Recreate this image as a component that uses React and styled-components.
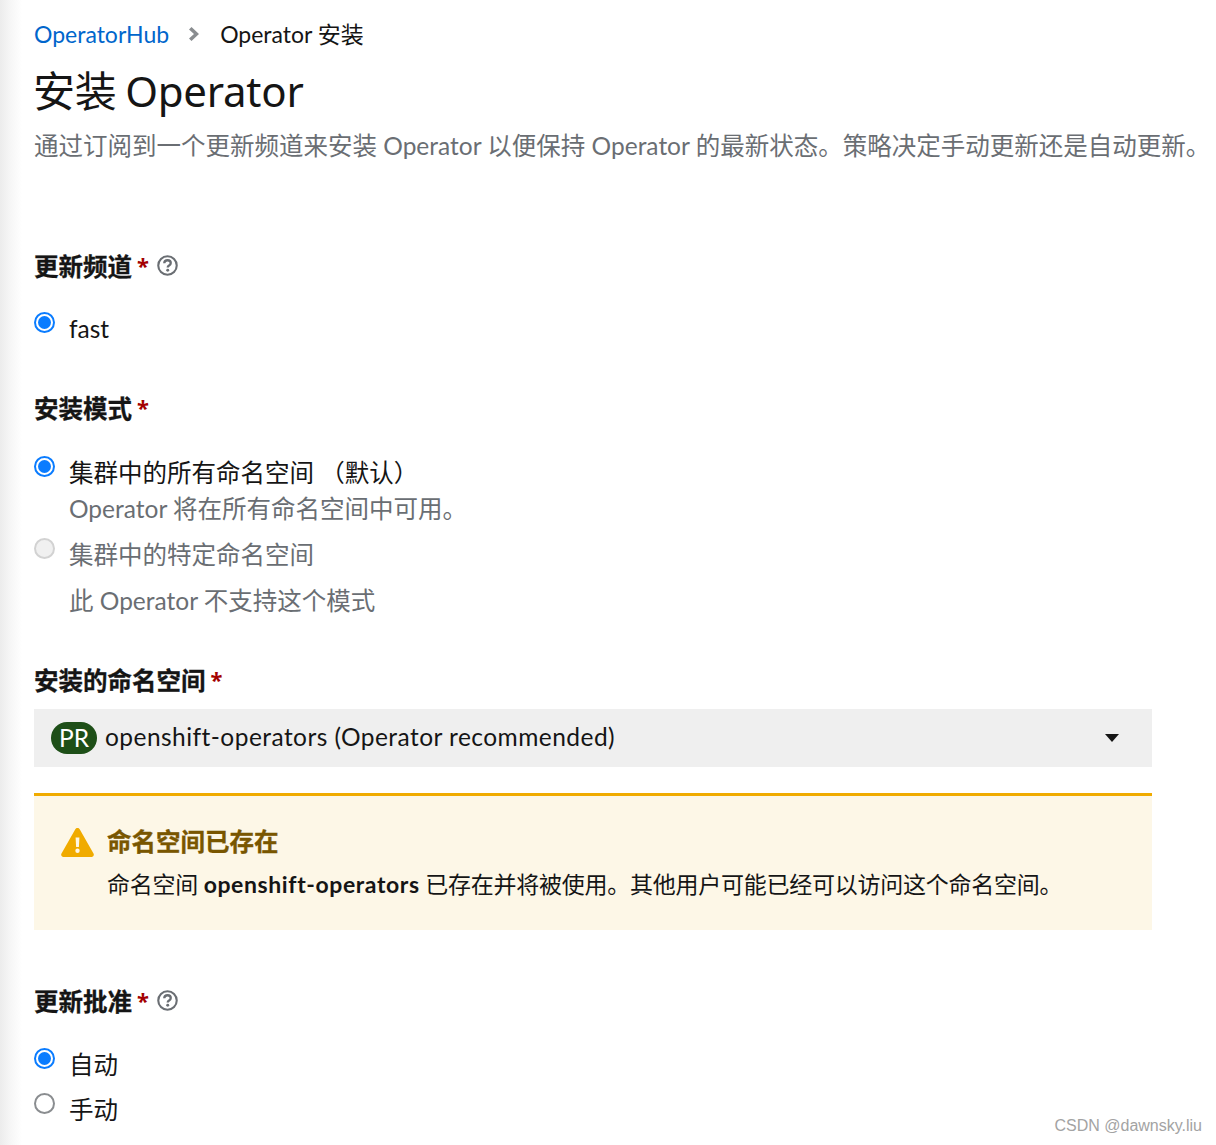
import React from "react";
import styled, { createGlobalStyle } from "styled-components";

const GlobalStyle = createGlobalStyle`
  html, body {
    margin: 0;
    padding: 0;
    background: #fff;
    overflow: hidden;
  }
  body {
    font-family: Lato, "Noto Sans CJK SC", sans-serif;
    color: #151515;
  }
`;

const Page = styled.div`
  position: relative;
  width: 1216px;
  height: 1145px;
  box-sizing: border-box;
  padding: 18px 0 0 34px;
  overflow: hidden;
  background: linear-gradient(to right, #ececec 0, #f6f6f6 10px, #fff 22px);
`;

const Breadcrumb = styled.nav`
  display: flex;
  align-items: center;
  height: 32px;
  font-size: 23px;
  line-height: 32px;
`;

const CrumbLink = styled.a`
  color: #0066cc;
`;

const CrumbSeparator = styled.svg`
  width: 12px;
  height: 16px;
  margin: 0 20px 0 19px;
  fill: #8a8d90;
`;

const Title = styled.h1`
  margin: 13px 0 0 -1px;
  font-family: "Noto Sans", "Noto Sans CJK SC", sans-serif;
  font-size: 42px;
  line-height: 56px;
  font-weight: 400;
  word-spacing: -2px;
  letter-spacing: -0.25px;
  color: #151515;
`;

const Description = styled.p`
  margin: 10px 0 0;
  font-size: 24.5px;
  line-height: 34px;
  color: #6a6e73;
  white-space: nowrap;
`;

const Section = styled.section`
  margin-top: ${(p) => p.$top}px;
`;

const Label = styled.div`
  display: flex;
  align-items: center;
  height: 34px;
  font-size: 24.5px;
  font-weight: 700;
  color: #151515;
  -webkit-text-stroke: 0.3px #151515;
`;

const Required = styled.span`
  margin-left: 5px;
  font-family: "Noto Sans", sans-serif;
  color: #a30000;
  font-size: 22px;
  -webkit-text-stroke: 0;
`;

const HelpIcon = styled.svg`
  width: 21px;
  height: 21px;
  margin: 1px 0 0 8px;
  color: #6a6e73;
`;

const RadioRow = styled.div`
  display: flex;
  align-items: flex-start;
  gap: 14px;
  margin-top: ${(p) => p.$top || 0}px;
  height: 36px;
`;

const Radio = styled.span`
  flex: none;
  box-sizing: border-box;
  width: 21px;
  height: 21px;
  margin-top: 1px;
  border-radius: 50%;
  border: 2px solid ${(p) => (p.$checked ? "#0a7cff" : p.$disabled ? "#d2d2d2" : "#8a8d90")};
  background: ${(p) => (p.$disabled ? "#f0f0f0" : "#fff")};
  display: flex;
  align-items: center;
  justify-content: center;
  &::after {
    content: "";
    display: ${(p) => (p.$checked ? "block" : "none")};
    width: 13px;
    height: 13px;
    border-radius: 50%;
    background: #0a7cff;
  }
`;

const RadioText = styled.span`
  font-size: 24.5px;
  line-height: 34px;
  margin-top: 1px;
  color: ${(p) => (p.$muted ? "#6a6e73" : "#151515")};
  white-space: nowrap;
`;

const HelperText = styled.div`
  margin: ${(p) => p.$top || 0}px 0 0 35px;
  font-size: 24.5px;
  line-height: 34px;
  color: #6a6e73;
`;

const Select = styled.div`
  display: flex;
  align-items: center;
  width: 1118px;
  height: 58px;
  margin-top: 13px;
  box-sizing: border-box;
  padding: 0 33px 0 17px;
  background: #efefef;
  font-size: 24.5px;
`;

const Badge = styled.span`
  flex: none;
  width: 46px;
  height: 32px;
  border-radius: 16px;
  background: #1e4f18;
  color: #fff;
  font-size: 24.5px;
  line-height: 32px;
  text-align: center;
  margin-right: 8px;
`;

const SelectValue = styled.span`
  flex: 1;
  margin-bottom: 3px;
  letter-spacing: 0.45px;
  color: #151515;
  white-space: nowrap;
`;

const Caret = styled.svg`
  width: 14px;
  height: 8px;
  fill: #151515;
`;

const Alert = styled.div`
  display: flex;
  width: 1118px;
  height: 137px;
  margin-top: 26px;
  box-sizing: border-box;
  padding: 29px 0 0 27px;
  border-top: 3px solid #f0ab00;
  background: #fdf7e7;
`;

const AlertIcon = styled.svg`
  flex: none;
  width: 33px;
  height: 30px;
  margin-top: 2px;
  fill: #f0ab00;
`;

const AlertBody = styled.div`
  margin-left: 13px;
`;

const AlertTitle = styled.div`
  font-size: 24.5px;
  font-weight: 700;
  line-height: 34px;
  color: #795600;
  -webkit-text-stroke: 0.3px #795600;
`;

const AlertText = styled.div`
  margin-top: 8px;
  font-size: 23px;
  line-height: 34px;
  letter-spacing: -0.25px;
  color: #151515;
  white-space: nowrap;
  strong {
    font-weight: 700;
    letter-spacing: 0.6px;
  }
`;

const Watermark = styled.div`
  position: absolute;
  right: 14px;
  bottom: 9px;
  font-family: "Liberation Sans", sans-serif;
  font-size: 16px;
  line-height: 20px;
  color: #a3a3a3;
`;

const Help = () => (
  <HelpIcon viewBox="0 0 20 20" fill="none">
    <circle cx="10" cy="10" r="8.8" stroke="currentColor" strokeWidth="2" />
    <path
      d="M6.900 7.900c.1-1.800 1.400-2.900 3.200-2.900 1.700 0 3 1 3 2.600 0 1.200-.7 1.800-1.600 2.400-.9.500-1.300 1-1.300 1.900"
      stroke="currentColor"
      strokeWidth="2.200"
    />
    <circle cx="10.200" cy="14.500" r="1.400" fill="currentColor" />
  </HelpIcon>
);

const App = () => {
  return (
    <Page>
      <GlobalStyle />
      <Breadcrumb>
        <CrumbLink>OperatorHub</CrumbLink>
        <CrumbSeparator viewBox="0 0 12 16">
          <path d="M3.500 1 11 8l-7.500 7L1 12.500 6 8 1 3.500z" />
        </CrumbSeparator>
        <span>Operator 安装</span>
      </Breadcrumb>
      <Title>安装 Operator</Title>
      <Description>
        通过订阅到一个更新频道来安装 Operator 以便保持 Operator 的最新状态。策略决定手动更新还是自动更新。
      </Description>

      <Section $top={85}>
        <Label>
          更新频道<Required>*</Required>
          <Help />
        </Label>
        <RadioRow $top={29}>
          <Radio $checked />
          <RadioText>fast</RadioText>
        </RadioRow>
      </Section>

      <Section $top={43}>
        <Label>
          安装模式<Required>*</Required>
        </Label>
        <RadioRow $top={31}>
          <Radio $checked />
          <RadioText>集群中的所有命名空间 （默认）</RadioText>
        </RadioRow>
        <HelperText $top={1}>Operator 将在所有命名空间中可用。</HelperText>
        <RadioRow $top={11}>
          <Radio $disabled />
          <RadioText $muted>集群中的特定命名空间</RadioText>
        </RadioRow>
        <HelperText $top={11}>此 Operator 不支持这个模式</HelperText>
      </Section>

      <Section $top={44}>
        <Label>
          安装的命名空间<Required>*</Required>
        </Label>
        <Select>
          <Badge>PR</Badge>
          <SelectValue>openshift-operators (Operator recommended)</SelectValue>
          <Caret viewBox="0 0 14 8">
            <path d="M0 0h14L7 8z" />
          </Caret>
        </Select>
        <Alert>
          <AlertIcon viewBox="0 0 33 30">
            <path
              fillRule="evenodd"
              d="M16.500 1c1 0 1.700.5 2.200 1.300l13.800 24.300c.9 1.600-.1 3.400-2 3.400H2.500c-1.900 0-2.900-1.800-2-3.400L14.300 2.300C14.800 1.500 15.500 1 16.500 1zM14.600 10.500l.5 9.500h2.800l.5-9.500zM16.500 21.500a2.200 2.200 0 1 0 0 4.400 2.200 2.200 0 0 0 0-4.400z"
            />
          </AlertIcon>
          <AlertBody>
            <AlertTitle>命名空间已存在</AlertTitle>
            <AlertText>
              命名空间 <strong>openshift-operators</strong> 已存在并将被使用。其他用户可能已经可以访问这个命名空间。
            </AlertText>
          </AlertBody>
        </Alert>
      </Section>

      <Section $top={53}>
        <Label>
          更新批准<Required>*</Required>
          <Help />
        </Label>
        <RadioRow $top={30}>
          <Radio $checked />
          <RadioText>自动</RadioText>
        </RadioRow>
        <RadioRow $top={9}>
          <Radio />
          <RadioText>手动</RadioText>
        </RadioRow>
      </Section>

      <Watermark>CSDN @dawnsky.liu</Watermark>
    </Page>
  );
};

export default App;
